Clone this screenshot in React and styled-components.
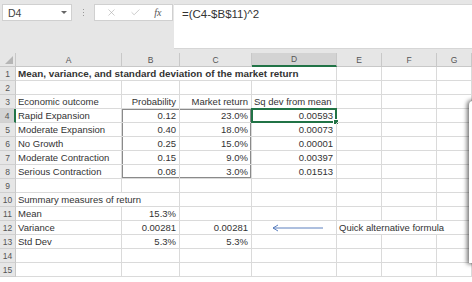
import React from "react";
import styled, { createGlobalStyle } from "styled-components";
import { X, Check } from "lucide-react";

const Global = createGlobalStyle`
  html, body { margin: 0; padding: 0; background: #e6e6e6; }
  body { font-family: "Liberation Sans", Arial, sans-serif; }
`;

const Page = styled.div`
  width: 472px;
  height: 282px;
  overflow: hidden;
  position: relative;
  background: #e6e6e6;
  display: flex;
  flex-direction: column;
`;

const Toolbar = styled.div`
  display: flex;
  align-items: flex-start;
  padding: 4px 0 0 2px;
  height: 53px;
  box-sizing: border-box;
`;

const NameBox = styled.div`
  width: 70px;
  height: 17px;
  box-sizing: border-box;
  background: #fff;
  border: 1px solid #d0d0d0;
  display: flex;
  align-items: center;
  justify-content: space-between;
  padding: 0 4px 0 5px;
  font-size: 10.5px;
  color: #444;
`;

const Caret = styled.span`
  width: 0;
  height: 0;
  border-left: 3px solid transparent;
  border-right: 3px solid transparent;
  border-top: 3px solid #666;
`;

const Dots = styled.div`
  width: 22px;
  height: 17px;
  display: flex;
  flex-direction: column;
  align-items: center;
  justify-content: center;
  gap: 2px;
  span {
    width: 1px;
    height: 1px;
    background: #999;
  }
`;

const FxBox = styled.div`
  width: 79px;
  height: 17px;
  box-sizing: border-box;
  background: #fff;
  border: 1px solid #d0d0d0;
  display: flex;
  align-items: center;
  justify-content: space-around;
  padding: 0 4px;
  color: #aaa;
`;

const Fx = styled.span`
  font-family: "Liberation Serif", serif;
  font-style: italic;
  font-size: 10px;
  color: #555;
`;

const FormulaBar = styled.div`
  margin-left: 1px;
  flex: 1;
  height: 45px;
  box-sizing: border-box;
  background: #fff;
  border-top: 1px solid #d6d6d6;
  border-bottom: 1px solid #d6d6d6;
  padding: 3px 0 0 8px;
  font-size: 11.5px;
  color: #333;
`;

const Sheet = styled.div`
  display: grid;
  grid-template-columns: 16px 106px 58px 72px 85px 45px 55px 1fr;
  grid-auto-rows: 14px;
  background: #fff;
  flex: 1;
  font-size: 9.5px;
  color: #333;
`;

const ColHead = styled.div`
  height: 14px;
  box-sizing: border-box;
  background: ${(p) => (p.$active ? "#d3d3d3" : "#e6e6e6")};
  border-right: 1px solid #c8c8c8;
  border-bottom: ${(p) => (p.$active ? "2px solid #217346" : "1px solid #c8c8c8")};
  display: flex;
  align-items: center;
  justify-content: center;
  font-size: 8.5px;
  color: #555;
`;

const Corner = styled(ColHead)`
  position: relative;
  &::after {
    content: "";
    position: absolute;
    right: 2px;
    bottom: 2px;
    width: 0;
    height: 0;
    border-left: 8px solid transparent;
    border-bottom: 8px solid #b5b5b5;
  }
`;

const RowHead = styled.div`
  box-sizing: border-box;
  background: ${(p) => (p.$active ? "#d3d3d3" : "#e6e6e6")};
  border-bottom: 1px solid #d0d0d0;
  border-right: ${(p) => (p.$active ? "2px solid #217346" : "1px solid #c8c8c8")};
  display: flex;
  align-items: center;
  justify-content: center;
  font-size: 8.5px;
  color: #555;
`;

const Cell = styled.div`
  position: relative;
  box-sizing: border-box;
  grid-column: ${(p) => (p.$span ? `span ${p.$span}` : "auto")};
  border-right: 1px solid #dadada;
  border-bottom: 1px solid #dadada;
  padding: 0 3px 0 2px;
  display: flex;
  align-items: center;
  justify-content: ${(p) => (p.$num ? "flex-end" : "flex-start")};
  white-space: nowrap;
  font-weight: ${(p) => (p.$bold ? 700 : 400)};
  font-size: ${(p) => (p.$bold ? "9.9px" : "inherit")};
  box-shadow: ${(p) => p.$box || "none"};
`;

const Selected = styled.div`
  position: absolute;
  left: -1px;
  top: -1px;
  right: -1px;
  bottom: -1px;
  border: 2px solid #217346;
  pointer-events: none;
  &::after {
    content: "";
    position: absolute;
    right: -4px;
    bottom: -4px;
    width: 4px;
    height: 4px;
    background: #217346;
    border: 1px solid #fff;
  }
`;

const Arrow = styled.svg`
  margin: 0 auto 0 18px;
`;

const Pane = styled.div`
  position: absolute;
  left: 469px;
  top: 101px;
  width: 12px;
  height: 162px;
  background: #fff;
  border-top-left-radius: 4px;
  box-shadow: -1px 0 4px 1px rgba(0, 0, 0, 0.55);
`;

const BOX = "#8a8a8a";
const edge = (r, c) => {
  const s = [];
  if (r < 4 || r > 8 || c < 1 || c > 2) return null;
  if (c === 1) s.push(`inset 1px 0 0 ${BOX}`);
  if (c === 2) s.push(`inset -1px 0 0 ${BOX}`);
  if (r === 4) s.push(`inset 0 1px 0 ${BOX}`);
  if (r === 8) s.push(`inset 0 -1px 0 ${BOX}`);
  return s.join(", ");
};

const rows = [
  [{ t: "Mean, variance, and standard deviation of the market return", bold: true, span: 4 }, null, null, null, "", "", ""],
  ["", "", "", "", "", "", ""],
  ["Economic outcome", { t: "Probability", num: true }, { t: "Market return", num: true }, "Sq dev from mean", "", "", ""],
  ["Rapid Expansion", { t: "0.12", num: true }, { t: "23.0%", num: true }, { t: "0.00593", num: true, sel: true }, "", "", ""],
  ["Moderate Expansion", { t: "0.40", num: true }, { t: "18.0%", num: true }, { t: "0.00073", num: true }, "", "", ""],
  ["No Growth", { t: "0.25", num: true }, { t: "15.0%", num: true }, { t: "0.00001", num: true }, "", "", ""],
  ["Moderate Contraction", { t: "0.15", num: true }, { t: "9.0%", num: true }, { t: "0.00397", num: true }, "", "", ""],
  ["Serious Contraction", { t: "0.08", num: true }, { t: "3.0%", num: true }, { t: "0.01513", num: true }, "", "", ""],
  ["", "", "", "", "", "", ""],
  [{ t: "Summary measures of return", span: 2 }, null, "", "", "", "", ""],
  ["Mean", { t: "15.3%", num: true }, "", "", "", "", ""],
  ["Variance", { t: "0.00281", num: true }, { t: "0.00281", num: true }, { arrow: true }, { t: "Quick alternative formula", span: 3 }, null, null],
  ["Std Dev", { t: "5.3%", num: true }, { t: "5.3%", num: true }, "", "", "", ""],
  ["", "", "", "", "", "", ""],
  ["", "", "", "", "", "", ""],
];

const cols = ["A", "B", "C", "D", "E", "F", "G"];

export default function App() {
  return (
    <Page>
      <Global />
      <Toolbar>
        <NameBox>
          D4 <Caret />
        </NameBox>
        <Dots>
          <span />
          <span />
          <span />
        </Dots>
        <FxBox>
          <X size={11} strokeWidth={1.3} />
          <Check size={11} strokeWidth={1.3} />
          <Fx>fx</Fx>
        </FxBox>
        <FormulaBar>=(C4-$B$11)^2</FormulaBar>
      </Toolbar>
      <Sheet>
        <Corner />
        {cols.map((c) => (
          <ColHead key={c} $active={c === "D"}>
            {c}
          </ColHead>
        ))}
        {rows.map((row, ri) => {
          const r = ri + 1;
          return (
            <React.Fragment key={r}>
              <RowHead $active={r === 4}>{r}</RowHead>
              {row.map((cell, ci) => {
                if (cell === null) return null;
                const c = typeof cell === "string" ? { t: cell } : cell;
                return (
                  <Cell key={ci} $num={c.num} $bold={c.bold} $span={c.span} $box={edge(r, ci)}>
                    {c.arrow ? (
                      <Arrow width="52" height="8" viewBox="0 0 52 8">
                        <path d="M51 4H1M1 4L6 1M1 4L6 7" stroke="#4a72b8" strokeWidth="0.9" fill="none" />
                      </Arrow>
                    ) : (
                      c.t
                    )}
                    {c.sel && <Selected />}
                  </Cell>
                );
              })}
            </React.Fragment>
          );
        })}
      </Sheet>
      <Pane />
    </Page>
  );
}
